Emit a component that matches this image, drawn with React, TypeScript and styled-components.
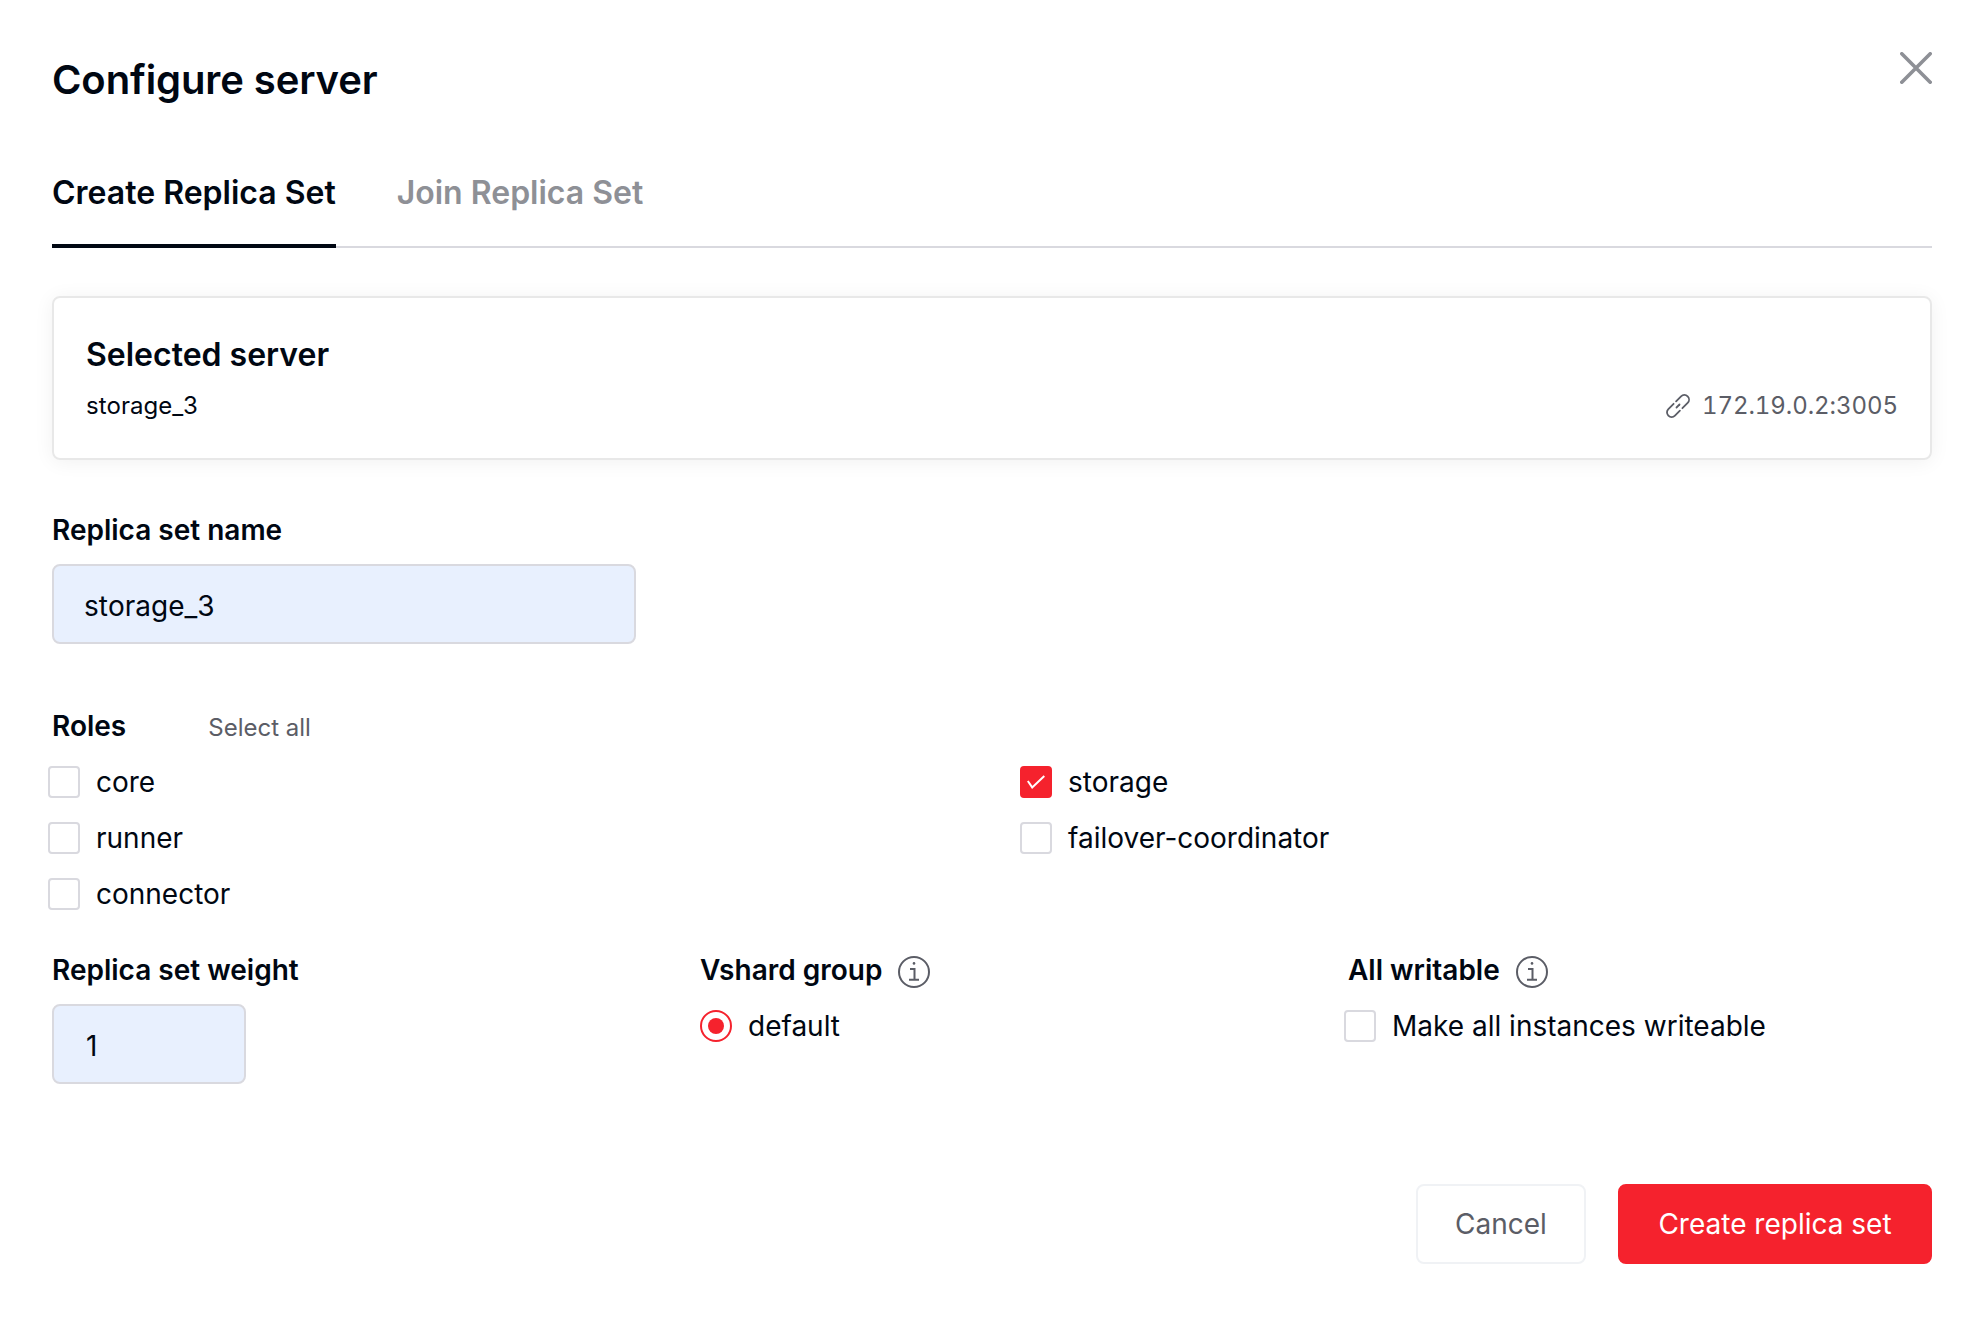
import React, { useState } from "react";
import styled, { createGlobalStyle } from "styled-components";

const ink = "#000712";
const muted = "#5b5d66";
const line = "#d9d9df";
const accent = "#f5222d";

const GlobalStyle = createGlobalStyle`
  * { box-sizing: border-box; }
  body {
    margin: 0;
    background: #fff;
    color: ${ink};
    font-family: Inter, "Noto Sans", sans-serif;
  }
  button, input { font-family: inherit; }
`;

const Modal = styled.main`
  display: flex;
  flex-direction: column;
  width: 1984px;
  height: 1318px;
  padding: 52px 52px 0;
`;

const Header = styled.header`
  display: flex;
  justify-content: space-between;
  align-items: flex-start;
  height: 120px;
`;

const Title = styled.h1`
  margin: 4px 0 0;
  font-size: 40px;
  line-height: 48px;
  font-weight: 600;
  letter-spacing: -0.1px;
`;

const CloseButton = styled.button`
  display: flex;
  padding: 0;
  border: 0;
  background: none;
`;

const Tabs = styled.nav`
  display: flex;
  gap: 61px;
  height: 76px;
  box-shadow: inset 0 -2px ${line};
`;

const Tab = styled.button<{ $active?: boolean }>`
  padding: 1px 0 31px;
  border: 0;
  border-bottom: 4px solid ${(p) => (p.$active ? ink : "transparent")};
  background: none;
  color: ${(p) => (p.$active ? ink : "#8e9096")};
  font-size: 32px;
  line-height: 40px;
  font-weight: 600;
`;

const ServerCard = styled.section`
  display: flex;
  flex-direction: column;
  gap: 11px;
  height: 164px;
  margin-top: 48px;
  padding: 37px 32px 0;
  border: 2px solid #e8e8e8;
  border-radius: 8px;
  box-shadow: 0 2px 20px rgba(0, 0, 0, 0.06);
`;

const CardTitle = styled.h2`
  margin: 0;
  font-size: 32px;
  line-height: 40px;
  font-weight: 600;
`;

const ServerLine = styled.div`
  display: flex;
  justify-content: space-between;
  font-size: 24px;
  line-height: 40px;
`;

const ServerName = styled.span`
  font-kerning: none;
`;

const Address = styled.span`
  display: flex;
  align-items: center;
  gap: 12px;
  color: ${muted};
  font-variant-numeric: tabular-nums;
  letter-spacing: -0.06px;
`;

const Label = styled.h3`
  margin: 0;
  font-size: 28px;
  line-height: 40px;
  font-weight: 600;
`;

const NameField = styled.section`
  display: flex;
  flex-direction: column;
  gap: 14px;
  margin-top: 50px;
`;

const TextInput = styled.input<{ $width: number; $indent: number }>`
  width: ${(p) => p.$width}px;
  height: 80px;
  padding: 4px 30px 0 ${(p) => p.$indent}px;
  border: 2px solid ${line};
  border-radius: 8px;
  outline: none;
  background: #e8f0fe;
  color: ${ink};
  font-size: 28px;
  font-kerning: none;
`;

const Roles = styled.section`
  display: flex;
  flex-direction: column;
  gap: 20px;
  margin-top: 62px;
`;

const RolesHead = styled.div`
  display: flex;
  gap: 82px;
  height: 40px;
`;

const SelectAll = styled.button`
  padding: 3px 0 0;
  border: 0;
  background: none;
  color: ${muted};
  font-size: 24px;
  line-height: 37px;
`;

const RolesGrid = styled.div`
  display: grid;
  grid-template-columns: 972px 1fr;
  row-gap: 24px;
  margin-left: -4px;
`;

const Option = styled.label<{ $outdent?: boolean }>`
  display: flex;
  align-items: center;
  gap: 16px;
  height: 32px;
  margin-left: ${(p) => (p.$outdent ? "-4px" : "0")};
  font-size: 28px;
  line-height: 32px;
`;

const CheckBox = styled.span<{ $checked: boolean }>`
  display: flex;
  align-items: center;
  justify-content: center;
  width: 32px;
  height: 32px;
  border: 2px solid ${(p) => (p.$checked ? accent : line)};
  border-radius: 4px;
  background: ${(p) => (p.$checked ? accent : "#fff")};
`;

const RadioMark = styled.span`
  display: flex;
  align-items: center;
  justify-content: center;
  width: 32px;
  height: 32px;
  border: 2px solid ${accent};
  border-radius: 50%;

  &::after {
    content: "";
    width: 16px;
    height: 16px;
    border-radius: 50%;
    background: ${accent};
  }
`;

const HiddenInput = styled.input`
  display: none;
`;

const Settings = styled.section`
  display: grid;
  grid-template-columns: 648px 648px 1fr;
  height: 134px;
  margin-top: 40px;
`;

const Setting = styled.div<{ $gap: number }>`
  display: flex;
  flex-direction: column;
  gap: ${(p) => p.$gap}px;
`;

const LabelRow = styled.div`
  display: flex;
  gap: 16px;
  height: 40px;

  svg { margin-top: 6px; }
`;

const Footer = styled.footer`
  display: flex;
  justify-content: flex-end;
  gap: 32px;
  margin-top: 100px;
`;

const Button = styled.button<{ $primary?: boolean; $width: number }>`
  width: ${(p) => p.$width}px;
  height: 80px;
  padding: 0;
  border: 2px solid ${(p) => (p.$primary ? accent : "#f0f2f5")};
  border-radius: 8px;
  background: ${(p) => (p.$primary ? accent : "#fff")};
  color: ${(p) => (p.$primary ? "#fff" : muted)};
  font-size: 28px;
`;

const CloseIcon = () => (
  <svg width="32" height="32" viewBox="0 0 32 32" fill="none" stroke="#8e9096" strokeWidth="3.6" strokeLinecap="round">
    <path d="M1.8 1.8 30.2 30.2M30.2 1.8 1.8 30.2" />
  </svg>
);

const LinkIcon = () => (
  <svg width="24" height="24" viewBox="0 0 24 24" fill="none" stroke={muted} strokeWidth="1.8" strokeLinecap="round">
    <path d="M10.1 7.3 15.05 2.35A4.66 4.66 0 0 1 21.65 8.95L16.4 14.2" />
    <path d="M13.9 16.7 8.95 21.65A4.66 4.66 0 0 1 2.35 15.05L7.6 9.8" />
    <path d="M10.5 13.5 13.5 10.5" />
  </svg>
);

const InfoIcon = () => (
  <svg width="32" height="32" viewBox="0 0 32 32" fill="none" stroke={muted} strokeWidth="2">
    <circle cx="16" cy="16" r="15" />
    <path d="M12 13h4.5v10.6M11 23.8h10" strokeLinejoin="miter" />
    <circle cx="16" cy="7.4" r="1.3" fill={muted} stroke="none" />
  </svg>
);

const CheckIcon = () => (
  <svg width="18" height="14" viewBox="0 0 18 14" fill="none" stroke="#fff" strokeWidth="2">
    <path d="M0.8 6 5.2 12.4 17.3 1" />
  </svg>
);

function Check({ name, initial = false, outdent }: { name: string; initial?: boolean; outdent?: boolean }) {
  const [on, setOn] = useState(initial);
  return (
    <Option $outdent={outdent}>
      <HiddenInput type="checkbox" checked={on} onChange={() => setOn(!on)} />
      <CheckBox $checked={on}>{on && <CheckIcon />}</CheckBox>
      {name}
    </Option>
  );
}

export default function App() {
  return (
    <>
      <GlobalStyle />
      <Modal>
        <Header>
          <Title>Configure server</Title>
          <CloseButton aria-label="Close"><CloseIcon /></CloseButton>
        </Header>
        <Tabs>
          <Tab $active>Create Replica Set</Tab>
          <Tab>Join Replica Set</Tab>
        </Tabs>
        <ServerCard>
          <CardTitle>Selected server</CardTitle>
          <ServerLine>
            <ServerName>storage_3</ServerName>
            <Address><LinkIcon />172.19.0.2:3005</Address>
          </ServerLine>
        </ServerCard>
        <NameField>
          <Label>Replica set name</Label>
          <TextInput $width={584} $indent={30} defaultValue="storage_3" />
        </NameField>
        <Roles>
          <RolesHead>
            <Label>Roles</Label>
            <SelectAll>Select all</SelectAll>
          </RolesHead>
          <RolesGrid>
            <Check name="core" />
            <Check name="storage" initial />
            <Check name="runner" />
            <Check name="failover-coordinator" />
            <Check name="connector" />
          </RolesGrid>
        </Roles>
        <Settings>
          <Setting $gap={14}>
            <Label>Replica set weight</Label>
            <TextInput $width={194} $indent={32} defaultValue="1" />
          </Setting>
          <Setting $gap={20}>
            <LabelRow><Label>Vshard group</Label><InfoIcon /></LabelRow>
            <Option>
              <HiddenInput type="radio" defaultChecked />
              <RadioMark />
              default
            </Option>
          </Setting>
          <Setting $gap={20}>
            <LabelRow><Label>All writable</Label><InfoIcon /></LabelRow>
            <Check name="Make all instances writeable" outdent />
          </Setting>
        </Settings>
        <Footer>
          <Button $width={170}>Cancel</Button>
          <Button $width={314} $primary>Create replica set</Button>
        </Footer>
      </Modal>
    </>
  );
}
